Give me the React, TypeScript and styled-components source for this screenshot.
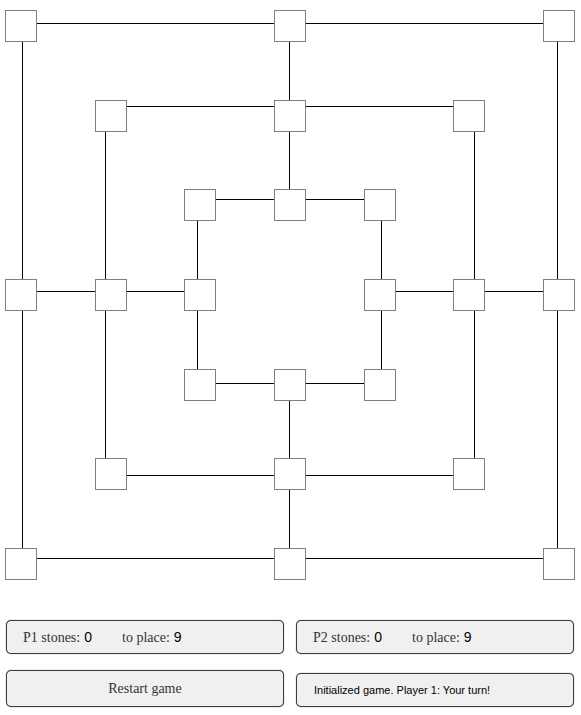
import React from "react";
import styled, { createGlobalStyle, css } from "styled-components";

const GlobalStyle = createGlobalStyle`
  *, *::before, *::after { box-sizing: border-box; }
  body { margin: 0; background: #fff; }
`;

const Page = styled.main`
  display: flex;
  flex-direction: column;
  gap: 40px;
  padding: 10px 6px 8px 5px;
`;

const Board = styled.section`
  display: grid;
  aspect-ratio: 1;
  > * { grid-area: 1 / 1; }
`;

const Lines = styled.svg`
  width: 100%;
  height: 100%;
  fill: none;
  stroke: #000;
  stroke-width: 1;
  shape-rendering: crispEdges;
  path { vector-effect: non-scaling-stroke; }
`;

const Points = styled.div`
  display: grid;
  grid-template-columns: repeat(7, 32px);
  grid-template-rows: repeat(7, 32px);
  justify-content: space-between;
  align-content: space-between;
`;

const Point = styled.button<{ $row: number; $col: number }>`
  grid-row: ${(p) => p.$row};
  grid-column: ${(p) => p.$col};
  padding: 0;
  border: 1px solid #808080;
  border-radius: 0;
  background: #fff;
  cursor: pointer;
`;

const Controls = styled.section`
  display: grid;
  grid-template-columns: 1fr 1fr;
  align-items: end;
  gap: 16px 12px;
  padding: 0 1px;
`;

const box = css`
  border: 1px solid #3c3c3e;
  border-radius: 5px;
  background: #f0f0f0;
  box-shadow: 0 0 1px #3c3c3e;
`;

const StonePanel = styled.div`
  ${box}
  display: grid;
  grid-template-columns: 99px 1fr;
  align-items: center;
  height: 34px;
  padding: 0 16px;
`;

const Stat = styled.label`
  display: flex;
  align-items: baseline;
  gap: 4px;
  color: #333;
  font: 14px/20px "Liberation Serif", serif;
  white-space: nowrap;
`;

const Count = styled.output`
  color: #000;
  font: 14px/20px "Liberation Sans", sans-serif;
`;

const RestartButton = styled.button`
  ${box}
  height: 37px;
  padding: 0 16px;
  color: #333;
  font: 14px/20px "Liberation Serif", serif;
  cursor: pointer;
`;

const Message = styled.output`
  ${box}
  display: flex;
  align-items: center;
  height: 34px;
  padding: 0 17px;
  color: #000;
  font: 11px/16px "Liberation Sans", sans-serif;
`;

const points: [number, number][] = [
  [1, 1], [1, 4], [1, 7],
  [2, 2], [2, 4], [2, 6],
  [3, 3], [3, 4], [3, 5],
  [4, 1], [4, 2], [4, 3], [4, 5], [4, 6], [4, 7],
  [5, 3], [5, 4], [5, 5],
  [6, 2], [6, 4], [6, 6],
  [7, 1], [7, 4], [7, 7],
];

const players = [
  { id: "P1", stones: 0, toPlace: 9 },
  { id: "P2", stones: 0, toPlace: 9 },
];

export default function App() {
  return (
    <>
      <GlobalStyle />
      <Page>
        <Board aria-label="Board">
          <Lines viewBox="0 0 570 570" aria-hidden="true">
            <path d="M17.5 13.5H552.5V548.5H17.5Z" />
            <path d="M100.5 96.5H469.5V465.5H100.5Z" />
            <path d="M192.5 189.5H376.5V373.5H192.5Z" />
            <path d="M284.5 13.5V189.5M284.5 373.5V548.5" />
            <path d="M17.5 281.5H192.5M376.5 281.5H552.5" />
          </Lines>
          <Points>
            {points.map(([row, col]) => (
              <Point
                key={`${row}-${col}`}
                type="button"
                $row={row}
                $col={col}
                aria-label={`Row ${row}, column ${col}`}
              />
            ))}
          </Points>
        </Board>
        <Controls>
          {players.map((player) => (
            <StonePanel key={player.id}>
              <Stat>
                {player.id} stones: <Count>{player.stones}</Count>
              </Stat>
              <Stat>
                to place: <Count>{player.toPlace}</Count>
              </Stat>
            </StonePanel>
          ))}
          <RestartButton type="button">Restart game</RestartButton>
          <Message>Initialized game. Player 1: Your turn!</Message>
        </Controls>
      </Page>
    </>
  );
}
